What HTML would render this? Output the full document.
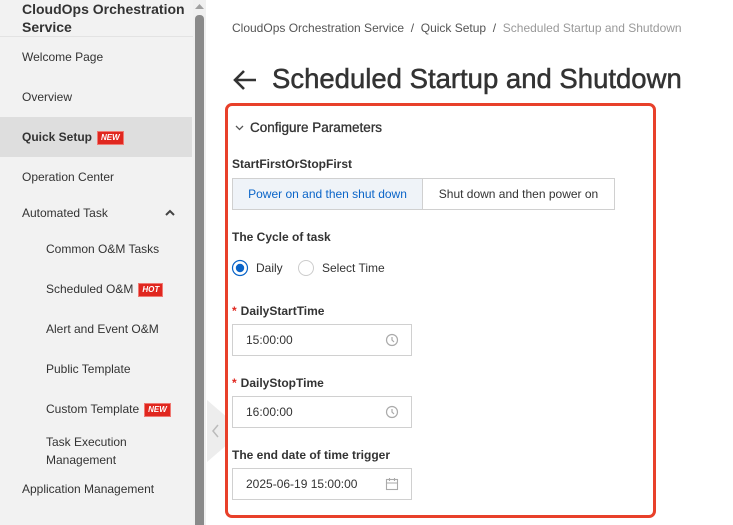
<!DOCTYPE html>
<html><head><meta charset="utf-8"><style>
*{box-sizing:border-box;margin:0;padding:0}
body{width:733px;height:525px;overflow:hidden;background:#fff;font-family:"Liberation Sans",sans-serif;color:#333;position:relative}
.side{position:absolute;left:0;top:0;width:193px;height:525px;background:#f2f2f2}
.side .t{position:absolute;left:22px;top:0;font-weight:bold;font-size:14px;line-height:18px;color:#333}
.side .div{position:absolute;left:0;top:36px;width:193px;height:1px;background:#e3e3e3}
.it{position:absolute;font-size:12px;color:#333;white-space:nowrap}
.hl{position:absolute;left:0;top:117px;width:192px;height:40px;background:#dedede}
.tag{display:inline-block;background:#e0271f;color:#fff;font-size:8px;font-style:italic;font-weight:bold;padding:1px 3px;margin-left:5px;vertical-align:1px;line-height:10px;border:1px solid #f07a74}
.sb{position:absolute;left:193px;top:0;width:13px;height:525px;background:#f0f0f0}
.thumb{position:absolute;left:195px;top:15px;width:9px;height:510px;background:#8a8a8a;border-radius:4px 4px 0 0}
.tab{position:absolute;left:207px;top:400px;width:18px;height:62px;background:#ededed;clip-path:polygon(0 0,100% 25%,100% 75%,0 100%)}
.bc{position:absolute;left:232px;top:21px;font-size:12px;color:#555}
.bc .g{color:#999}
h1{position:absolute;left:272px;top:63px;font-size:27.5px;font-weight:normal;color:#333;-webkit-text-stroke:0.5px #333;white-space:nowrap}
.arrow{position:absolute;left:232px;top:68px}
.box{position:absolute;left:225px;top:103px;width:431px;height:415px;border:3px solid #e8402a;border-radius:7px}
.lab{position:absolute;font-size:12px;font-weight:bold;color:#333;white-space:nowrap}
.seg{position:absolute;left:232px;top:178px;width:383px;height:32px;border:1px solid #d0d0d0;display:flex;font-size:12px}
.seg div{display:flex;align-items:center;justify-content:center}
.inp{position:absolute;left:232px;width:180px;height:32px;border:1px solid #d0d0d0;font-size:12px;padding-left:13px;line-height:30px;color:#333}
.inp svg{position:absolute;right:12px;top:8px}
.req{color:#e0271f;margin-right:4px}
</style></head><body>
<div class="side">
<div class="t">CloudOps Orchestration<br>Service</div>
<div class="div"></div>
<div class="hl"></div>
<div class="it" style="left:22px;top:50px">Welcome Page</div>
<div class="it" style="left:22px;top:90px">Overview</div>
<div class="it" style="left:22px;top:130px;font-weight:bold">Quick Setup<span class="tag">NEW</span></div>
<div class="it" style="left:22px;top:170px">Operation Center</div>
<div class="it" style="left:22px;top:206px">Automated Task</div>
<svg style="position:absolute;left:165px;top:209px" width="10" height="7"><path d="M1 6 L5 2 L9 6" fill="none" stroke="#444" stroke-width="2"/></svg>
<div class="it" style="left:46px;top:242px">Common O&amp;M Tasks</div>
<div class="it" style="left:46px;top:282px">Scheduled O&amp;M<span class="tag">HOT</span></div>
<div class="it" style="left:46px;top:322px">Alert and Event O&amp;M</div>
<div class="it" style="left:46px;top:362px">Public Template</div>
<div class="it" style="left:46px;top:402px">Custom Template<span class="tag">NEW</span></div>
<div class="it" style="left:46px;top:433px;line-height:18px">Task Execution<br>Management</div>
<div class="it" style="left:22px;top:482px">Application Management</div>
</div>
<div class="sb"></div>
<svg style="position:absolute;left:195px;top:4px" width="9" height="6"><path d="M0 5 L4.5 0 L9 5Z" fill="#a0a0a0"/></svg>
<div class="thumb"></div>
<div class="tab"></div>
<svg style="position:absolute;left:212px;top:424px" width="8" height="14"><path d="M6 1 L1 7 L6 13" fill="none" stroke="#bbb" stroke-width="1.5"/></svg>
<div class="bc">CloudOps Orchestration Service &nbsp;/&nbsp; Quick Setup &nbsp;/&nbsp; <span class="g">Scheduled Startup and Shutdown</span></div>
<svg class="arrow" width="26" height="24"><path d="M24 12 H3 M12 3 L3 12 L12 21" fill="none" stroke="#333" stroke-width="2.6"/></svg>
<h1>Scheduled Startup and Shutdown</h1>
<div class="box"></div>
<svg style="position:absolute;left:235px;top:125px" width="9" height="6"><path d="M1 1 L4.5 4.5 L8 1" fill="none" stroke="#555" stroke-width="1.3"/></svg>
<div class="lab" style="left:250px;top:120px;font-size:13.5px;font-weight:normal;color:#333;-webkit-text-stroke:0.3px #333">Configure Parameters</div>
<div class="lab" style="left:232px;top:157px">StartFirstOrStopFirst</div>
<div class="seg"><div style="width:190px;background:#eff3f8;color:#0a64c8;border-right:1px solid #d0d0d0">Power on and then shut down</div><div style="flex:1;color:#333">Shut down and then power on</div></div>
<div class="lab" style="left:232px;top:230px">The Cycle of task</div>
<svg style="position:absolute;left:231px;top:259px" width="18" height="18"><circle cx="9" cy="9" r="7.5" fill="#fff" stroke="#0a64c8" stroke-width="1.2"/><circle cx="9" cy="9" r="4.2" fill="#0a64c8"/></svg>
<div class="it" style="left:256px;top:261px;font-size:12px">Daily</div>
<svg style="position:absolute;left:297px;top:259px" width="18" height="18"><circle cx="9" cy="9" r="7.5" fill="#fff" stroke="#ccc" stroke-width="1"/></svg>
<div class="it" style="left:322px;top:261px;font-size:12px">Select Time</div>
<div class="lab" style="left:232px;top:304px"><span class="req">*</span>DailyStartTime</div>
<div class="inp" style="top:324px">15:00:00<svg width="14" height="14"><circle cx="7" cy="7" r="5.5" fill="none" stroke="#aaa" stroke-width="1.2"/><path d="M7 4 V7 L9 9" fill="none" stroke="#aaa" stroke-width="1.2"/></svg></div>
<div class="lab" style="left:232px;top:376px"><span class="req">*</span>DailyStopTime</div>
<div class="inp" style="top:396px">16:00:00<svg width="14" height="14"><circle cx="7" cy="7" r="5.5" fill="none" stroke="#aaa" stroke-width="1.2"/><path d="M7 4 V7 L9 9" fill="none" stroke="#aaa" stroke-width="1.2"/></svg></div>
<div class="lab" style="left:232px;top:448px">The end date of time trigger</div>
<div class="inp" style="top:468px">2025-06-19 15:00:00<svg style="right:12px" width="14" height="14"><rect x="1.5" y="2.5" width="11" height="10" fill="none" stroke="#aaa" stroke-width="1.1"/><path d="M1.5 6 H12.5 M4.5 1 V4 M9.5 1 V4" stroke="#aaa" stroke-width="1.1"/></svg></div>
</body></html>
